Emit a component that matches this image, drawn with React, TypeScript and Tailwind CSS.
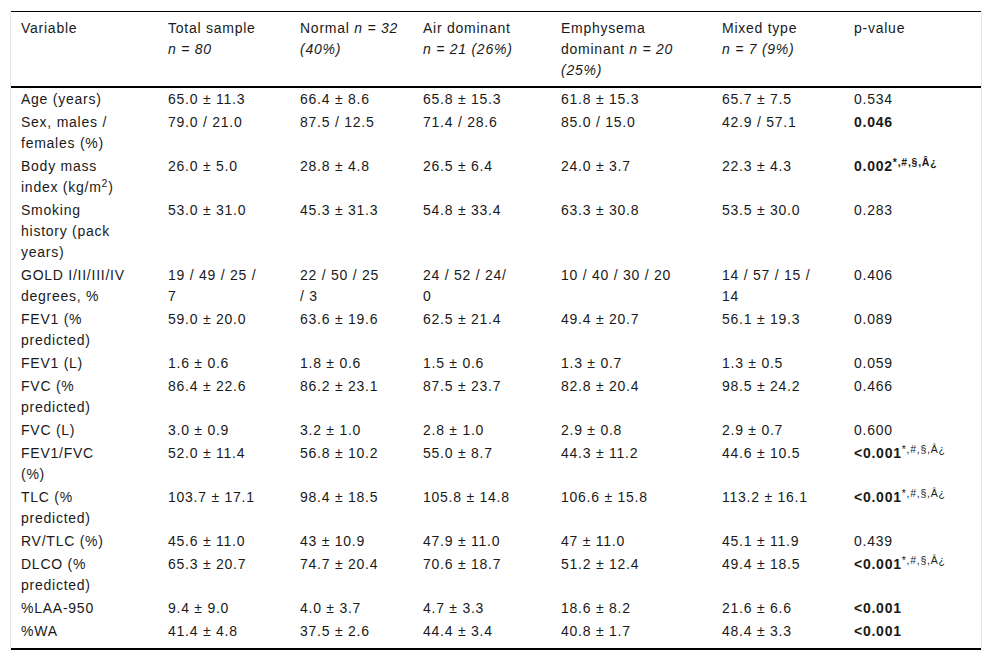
import React from "react";

type Cell = React.ReactNode;

const Sig = ({ v }: { v: string }) => (
  <>
    <b className="font-bold">{v}</b>
    <sup>*,#,§,Â¿</sup>
  </>
);

const rows: Cell[][] = [
  ["Age (years)", "65.0 ± 11.3", "66.4 ± 8.6", "65.8 ± 15.3", "61.8 ± 15.3", "65.7 ± 7.5", "0.534"],
  [<>Sex, males /<br />females (%)</>, "79.0 / 21.0", "87.5 / 12.5", "71.4 / 28.6", "85.0 / 15.0", "42.9 / 57.1", <b className="font-bold">0.046</b>],
  [
    <>Body mass<br />index (kg/m<sup>2</sup>)</>,
    "26.0 ± 5.0",
    "28.8 ± 4.8",
    "26.5 ± 6.4",
    "24.0 ± 3.7",
    "22.3 ± 4.3",
    <b className="font-bold">0.002<sup>*,#,§,Â¿</sup></b>,
  ],
  [<>Smoking<br />history (pack<br />years)</>, "53.0 ± 31.0", "45.3 ± 31.3", "54.8 ± 33.4", "63.3 ± 30.8", "53.5 ± 30.0", "0.283"],
  [
    <>GOLD I/II/III/IV<br />degrees, %</>,
    <>19 / 49 / 25 /<br />7</>,
    <>22 / 50 / 25<br />/ 3</>,
    <>24 / 52 / 24/<br />0</>,
    "10 / 40 / 30 / 20",
    <>14 / 57 / 15 /<br />14</>,
    "0.406",
  ],
  [<>FEV1 (%<br />predicted)</>, "59.0 ± 20.0", "63.6 ± 19.6", "62.5 ± 21.4", "49.4 ± 20.7", "56.1 ± 19.3", "0.089"],
  ["FEV1 (L)", "1.6 ± 0.6", "1.8 ± 0.6", "1.5 ± 0.6", "1.3 ± 0.7", "1.3 ± 0.5", "0.059"],
  [<>FVC (%<br />predicted)</>, "86.4 ± 22.6", "86.2 ± 23.1", "87.5 ± 23.7", "82.8 ± 20.4", "98.5 ± 24.2", "0.466"],
  ["FVC (L)", "3.0 ± 0.9", "3.2 ± 1.0", "2.8 ± 1.0", "2.9 ± 0.8", "2.9 ± 0.7", "0.600"],
  [<>FEV1/FVC<br />(%)</>, "52.0 ± 11.4", "56.8 ± 10.2", "55.0 ± 8.7", "44.3 ± 11.2", "44.6 ± 10.5", <Sig v="<0.001" />],
  [<>TLC (%<br />predicted)</>, "103.7 ± 17.1", "98.4 ± 18.5", "105.8 ± 14.8", "106.6 ± 15.8", "113.2 ± 16.1", <Sig v="<0.001" />],
  ["RV/TLC (%)", "45.6 ± 11.0", "43 ± 10.9", "47.9 ± 11.0", "47 ± 11.0", "45.1 ± 11.9", "0.439"],
  [<>DLCO (%<br />predicted)</>, "65.3 ± 20.7", "74.7 ± 20.4", "70.6 ± 18.7", "51.2 ± 12.4", "49.4 ± 18.5", <Sig v="<0.001" />],
  ["%LAA-950", "9.4 ± 9.0", "4.0 ± 3.7", "4.7 ± 3.3", "18.6 ± 8.2", "21.6 ± 6.6", <b className="font-bold">&lt;0.001</b>],
  ["%WA", "41.4 ± 4.8", "37.5 ± 2.6", "44.4 ± 3.4", "40.8 ± 1.7", "48.4 ± 3.3", <b className="font-bold">&lt;0.001</b>],
];

const headers: Cell[] = [
  "Variable",
  <>Total sample<br /><i>n = 80</i></>,
  <>Normal <i>n = 32</i><br /><i>(40%)</i></>,
  <>Air dominant<br /><i>n = 21 (26%)</i></>,
  <>Emphysema<br />dominant <i>n = 20</i><br /><i>(25%)</i></>,
  <>Mixed type<br /><i>n = 7 (9%)</i></>,
  "p-value",
];

const widths = ["w-[147px]", "w-[132px]", "w-[123px]", "w-[138px]", "w-[161px]", "w-[132px]", "w-[137px]"];

export default function App() {
  return (
    <div className="min-h-screen bg-white px-[10px] pt-[11px] font-['Liberation_Sans',Arial,sans-serif] text-[14px] leading-[21px] tracking-[0.75px] text-[#1a1a1a]">
      <div className="border-x border-[#e6e6e6]">
        <table className="w-full table-fixed border-collapse">
          <colgroup>
            {widths.map((w, i) => (
              <col key={i} className={w} />
            ))}
          </colgroup>
          <thead>
            <tr className="border-t border-black border-b-2">
              {headers.map((h, i) => (
                <th key={i} className="pl-[10px] pt-[6px] pb-[5px] text-left align-top font-normal whitespace-nowrap">
                  {h}
                </th>
              ))}
            </tr>
          </thead>
          <tbody className="border-b-2 border-black">
            {rows.map((r, ri) => (
              <tr key={ri}>
                {r.map((c, ci) => (
                  <td
                    key={ci}
                    className={
                      ri === rows.length - 1
                        ? "pl-[10px] pt-px pb-[6px] align-top whitespace-nowrap"
                        : "pl-[10px] py-px align-top whitespace-nowrap"
                    }
                  >
                    {c}
                  </td>
                ))}
              </tr>
            ))}
          </tbody>
        </table>
      </div>
    </div>
  );
}
